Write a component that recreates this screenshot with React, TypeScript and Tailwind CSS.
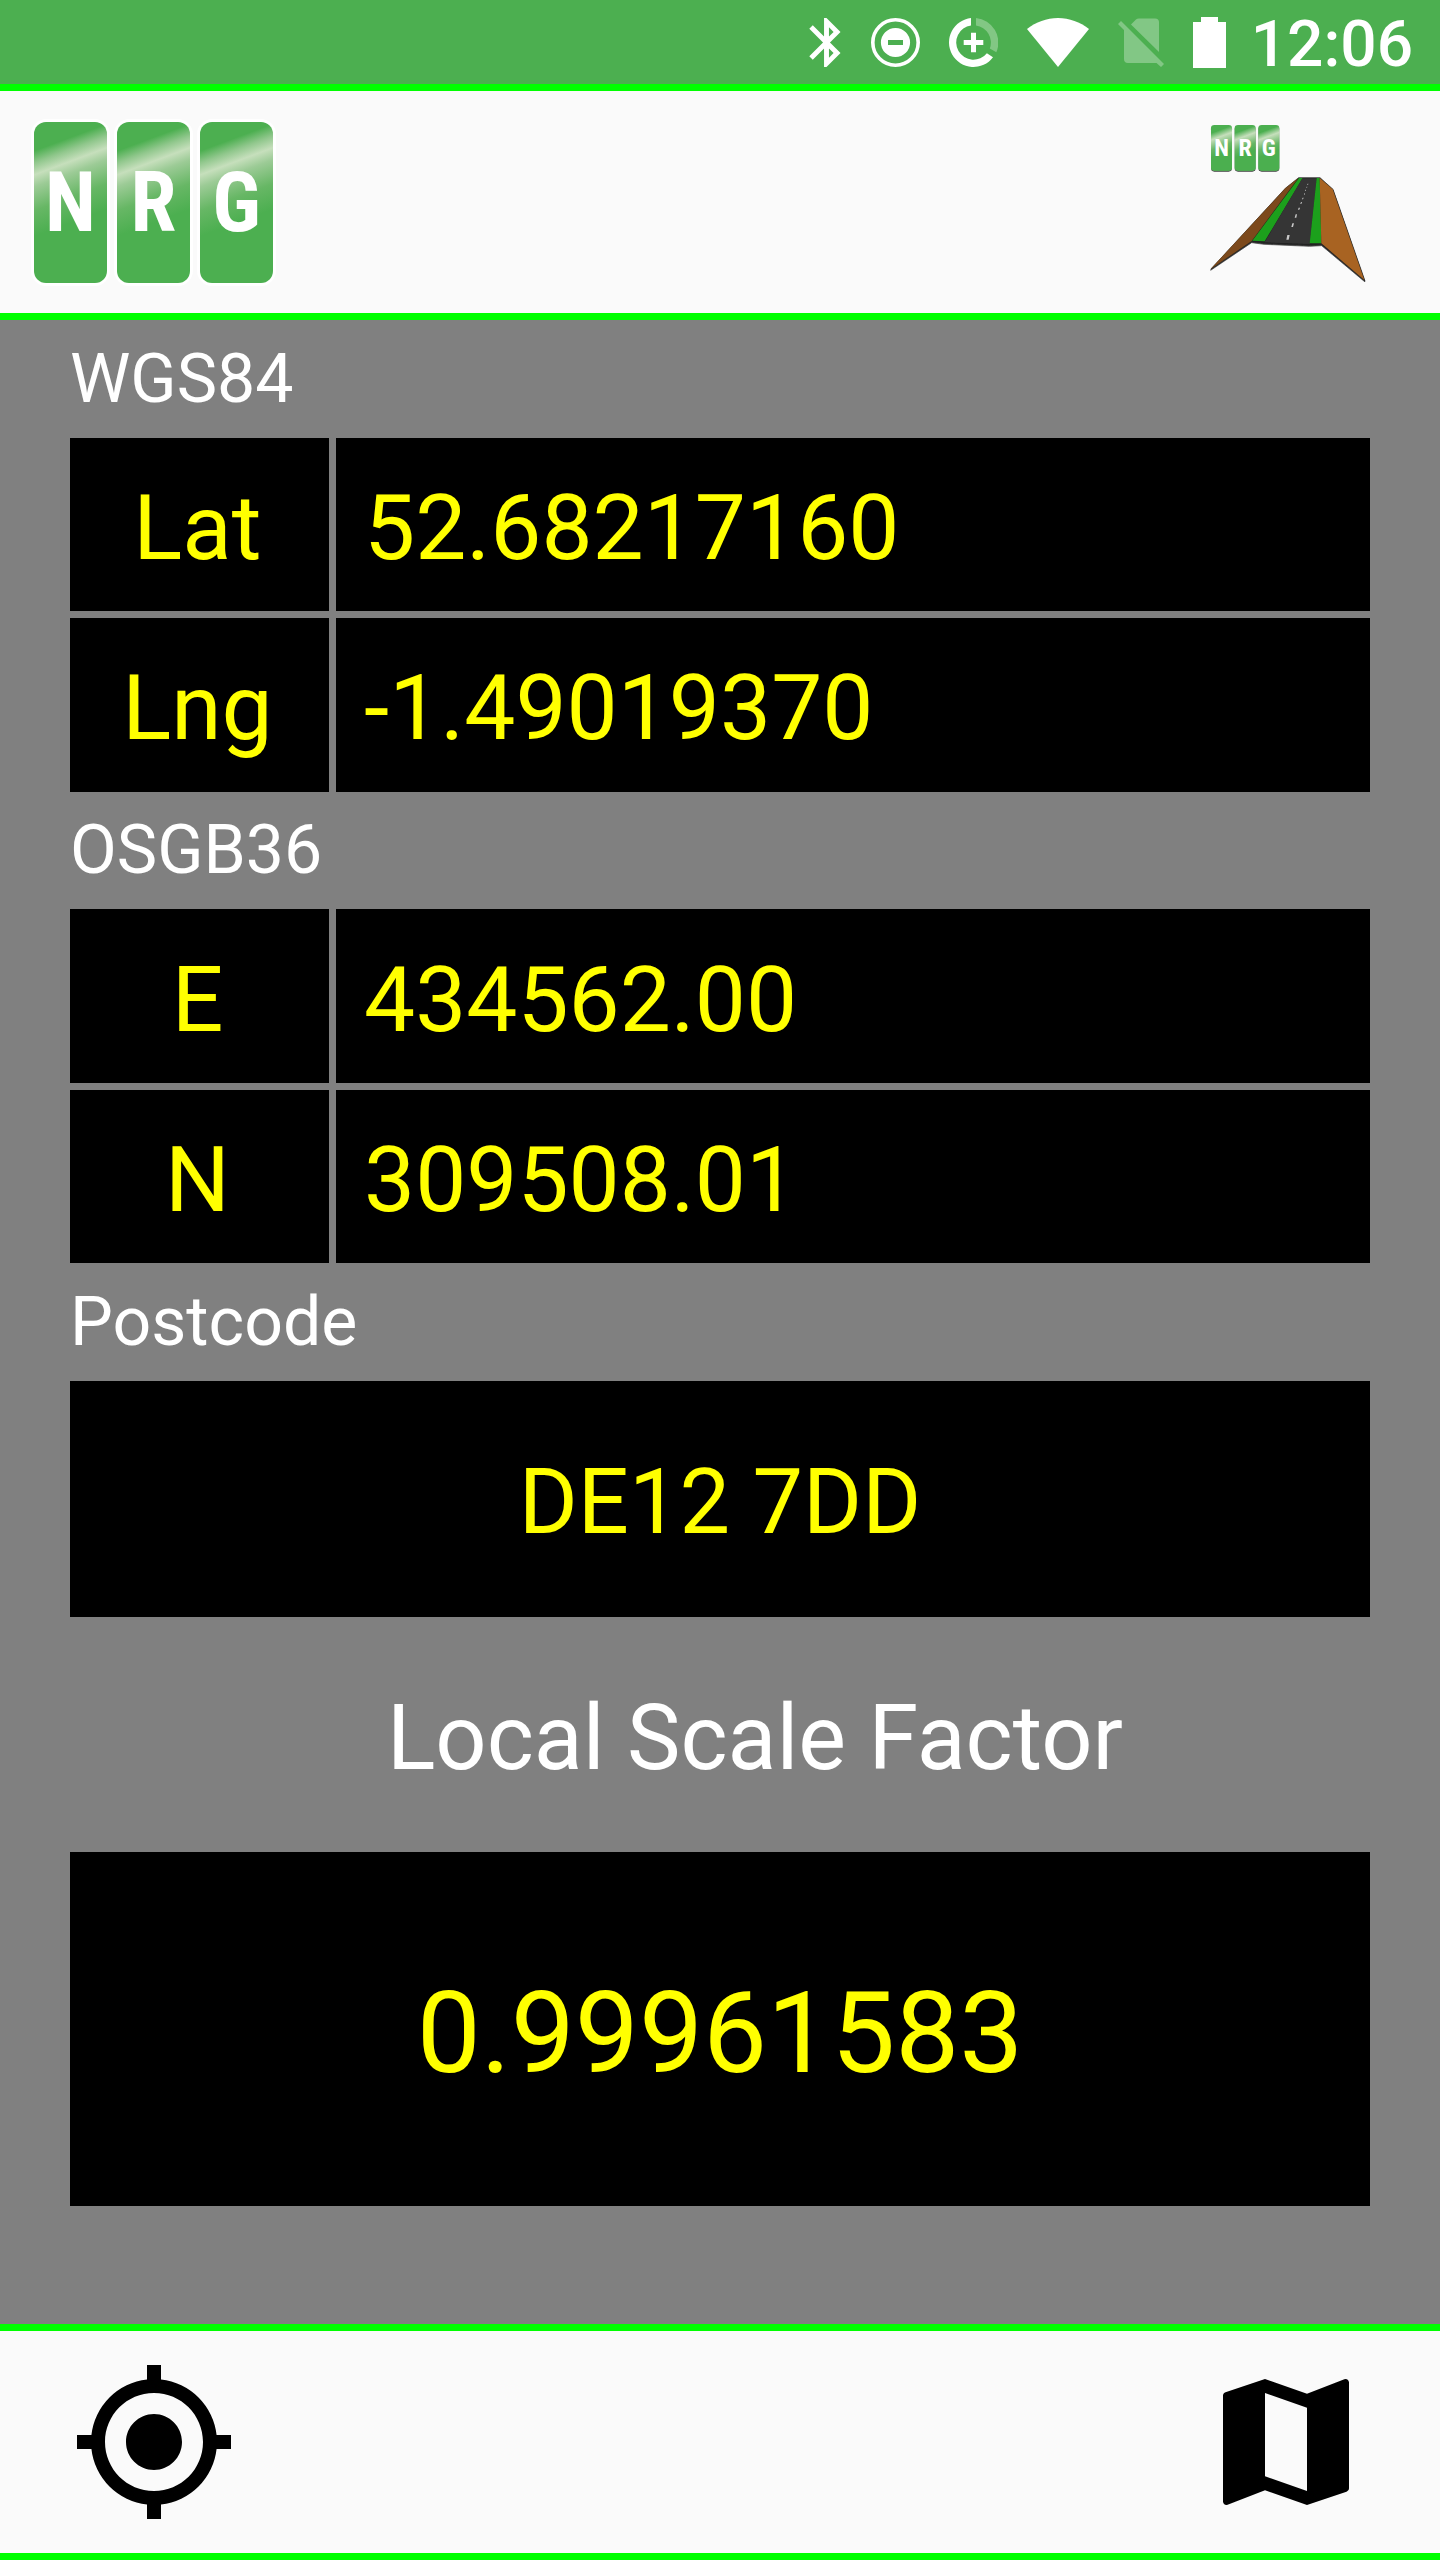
import { MdBluetooth, MdMap, MdMyLocation } from "react-icons/md";

interface Reading {
    label: string;
    value: string;
}

const WGS84: Reading[] = [
    { label: "Lat", value: "52.68217160" },
    { label: "Lng", value: "-1.49019370" },
];

const OSGB36: Reading[] = [
    { label: "E", value: "434562.00" },
    { label: "N", value: "309508.01" },
];

const LETTERS = ["N", "R", "G"];

function StatusBar() {
    return (
        <div className="flex h-[84px] items-center justify-end gap-[29px] bg-[#4caf50] pr-[27px] text-white">
            <MdBluetooth className="-mx-[14px] size-[59px]" />
            {/* Do not disturb */}
            <svg className="size-[49px]" viewBox="0 0 49 49" fill="currentColor">
                <circle cx="24.5" cy="24.5" r="22.7" fill="none" stroke="currentColor" strokeWidth="3.6" />
                <path fillRule="evenodd" d="M24.5 9.9a14.6 14.6 0 1 0 0 29.2a14.6 14.6 0 1 0 0-29.2zM17 22h15v5H17z" />
            </svg>
            {/* Data saver */}
            <svg className="size-[49px]" viewBox="0 0 49 49" fill="currentColor">
                <path d="M22 .1A24.5 24.5 0 1 0 44 39.3L37.9 35.2A17.2 17.2 0 1 1 22 7.5z" />
                <path opacity=".3" d="M27 .1A24.5 24.5 0 0 1 47.3 34.3L40.8 30.6A17.2 17.2 0 0 0 27 7.5z" />
                <path d="M22 14.7h5V22h7.300v5H27v7.300h-5V27h-7.300v-5H22z" />
            </svg>
            {/* Wifi */}
            <svg className="h-[49px] w-[62px]" viewBox="0 0 62 49" fill="currentColor">
                <path d="M31 49L0 11C9 4 19.500 0 31 0s22 4 31 11z" />
            </svg>
            {/* No sim */}
            <svg className="h-[49px] w-[46px] opacity-30" viewBox="0 0 46 49" fill="currentColor">
                <path d="M13 6.500L18 1.500Q19 .5 21 .5H37Q41 .5 41 4.500V34z" />
                <path d="M3 3L0 6L6 12V41Q6 45 10 45H38.500L43 49L46 46z" />
            </svg>
            {/* Battery */}
            <svg className="h-[51px] w-[33px]" viewBox="0 0 33 51" fill="currentColor">
                <path d="M8 0h17v5h8v46H0V5h8z" />
            </svg>
            <time className="-ml-1 pt-[6px] text-[64px] leading-[78px] font-medium">12:06</time>
        </div>
    );
}

function Logo() {
    return (
        <svg className="h-[167px] w-[245px]" viewBox="-3 -3 245 167" role="img" aria-label="NRG">
            <defs>
                <linearGradient id="gloss" gradientUnits="userSpaceOnUse" x1="0" y1="29" x2="28" y2="104">
                    <stop offset="0" stopColor="#4caf50" />
                    <stop offset=".14" stopColor="#90c78c" />
                    <stop offset=".28" stopColor="#c6dfbc" />
                    <stop offset=".42" stopColor="#9ccb96" />
                    <stop offset=".7" stopColor="#67b765" />
                    <stop offset="1" stopColor="#4caf50" />
                </linearGradient>
            </defs>
            {LETTERS.map((letter, i) => (
                <g key={letter} transform={`translate(${i * 83} 0)`}>
                    <rect x="-1.500" y="-1.500" width="76" height="164" rx="14" fill="none" stroke="#fff" strokeWidth="3" />
                    <rect width="73" height="161" rx="12" fill="url(#gloss)" />
                    <text
                        x="36.500"
                        y="109"
                        textAnchor="middle"
                        fill="#fff"
                        className="font-['Liberation_Sans_Narrow','Roboto_Condensed','DejaVu_Sans_Condensed',sans-serif] text-[83px] font-bold"
                    >
                        {letter}
                    </text>
                </g>
            ))}
        </svg>
    );
}

function RoadLogo() {
    return (
        <svg className="h-[160px] w-[159px]" viewBox="84 66 477 480" role="img" aria-label="NRG road">
            <defs>
                <linearGradient id="gloss-sm" gradientUnits="userSpaceOnUse" x1="0" y1="25" x2="24" y2="89">
                    <stop offset="0" stopColor="#4caf50" />
                    <stop offset=".28" stopColor="#c6dfbc" />
                    <stop offset=".7" stopColor="#67b765" />
                    <stop offset="1" stopColor="#4caf50" />
                </linearGradient>
                <filter id="shadow" x="-10%" y="-10%" width="120%" height="120%">
                    <feDropShadow dx="0" dy="3" stdDeviation="2" floodColor="#000" floodOpacity=".75" />
                </filter>
            </defs>
            {LETTERS.map((letter, i) => (
                <g key={letter} transform={`translate(${93 + i * 71} 75)`}>
                    <rect width="63" height="137" rx="10" fill="url(#gloss-sm)" filter="url(#shadow)" />
                    <text
                        x="31.500"
                        y="92"
                        textAnchor="middle"
                        fill="#fff"
                        className="font-['Liberation_Sans_Narrow','Roboto_Condensed','DejaVu_Sans_Condensed',sans-serif] text-[72px] font-bold"
                    >
                        {letter}
                    </text>
                </g>
            ))}
            <g filter="url(#shadow)">
                <path
                    fill="#222"
                    stroke="#222"
                    strokeWidth="2"
                    d="M356 233H420L459 268L555 543L425 434L388 436L252 430L215 425L92 508L316 265z"
                />
                <path fill="#7b4a1a" d="M355 234L316 265L92 507L215 423z" />
                <path fill="#1fa01f" d="M357 234H368L254 424L217 422z" />
                <path fill="#353535" d="M367 235H410L389 432L254 427z" />
                <path fill="#1fa01f" d="M410 234H419L424 430H389z" />
                <path fill="#a86420" d="M419 234L458 268L553 540L424 430z" />
            </g>
            <path
                fill="#c8c8c8"
                d="M322 405h7l-3 14h-7zM337 370h5l-3 11h-5zM347 343h4l-2 10h-5zM356 323h4l-2 6h-4zM363 306h3l-2 6h-3zM368 293h3l-2 5h-3zM373 280h2l-1 4h-2zM376 269h2l-1 4h-2zM380 260h2l-1 3h-2zM383 251h2l-1 4h-2z"
            />
        </svg>
    );
}

function SectionTitle({ children }: { children: string }) {
    return <h2 className="flex items-center text-[68px] leading-[82px] text-white">{children}</h2>;
}

function Readings({ items }: { items: Reading[] }) {
    return (
        <dl className="flex flex-col gap-[7px]">
            {items.map((item) => (
                <div key={item.label} className="flex flex-1 gap-[7px] leading-[107px]">
                    <dt className="flex w-[259px] items-center justify-center bg-black pt-2 pr-1">{item.label}</dt>
                    <dd className="flex flex-1 items-center bg-black pt-2 pl-7">{item.value}</dd>
                </div>
            ))}
        </dl>
    );
}

export default function App() {
    return (
        <div className="flex min-h-screen flex-col bg-[#808080] font-[Roboto,sans-serif]">
            <StatusBar />

            {/* Header */}
            <header className="flex h-[236px] items-center justify-between border-y-[7px] border-[#00ff00] bg-[#fafafa] pr-[73px] pl-[31px]">
                <Logo />
                <RoadLogo />
            </header>

            {/* Body: weighted rows */}
            <main className="grid flex-1 grid-rows-[1fr_3fr_1fr_3fr_1fr_2fr_2fr_3fr_1fr] px-[70px] text-[91px] text-[#ffff00]">
                <SectionTitle>WGS84</SectionTitle>
                <Readings items={WGS84} />
                <SectionTitle>OSGB36</SectionTitle>
                <Readings items={OSGB36} />
                <SectionTitle>Postcode</SectionTitle>
                <p className="flex items-center justify-center bg-black pt-2 text-[90px] leading-[107px]">DE12 7DD</p>
                <h2 className="flex items-center justify-center pt-2 pl-[70px] text-[90px] leading-[107px] text-white">
                    Local Scale Factor
                </h2>
                <p className="flex items-center justify-center bg-black pt-2 text-[114px] leading-[135px]">0.99961583</p>
            </main>

            {/* Footer */}
            <footer className="flex h-[236px] items-center justify-between border-y-[7px] border-[#00ff00] bg-[#fafafa] px-[70px] text-black">
                <button aria-label="My location">
                    <MdMyLocation className="size-[168px]" />
                </button>
                <button aria-label="Map">
                    <MdMap className="size-[168px]" />
                </button>
            </footer>
        </div>
    );
}
